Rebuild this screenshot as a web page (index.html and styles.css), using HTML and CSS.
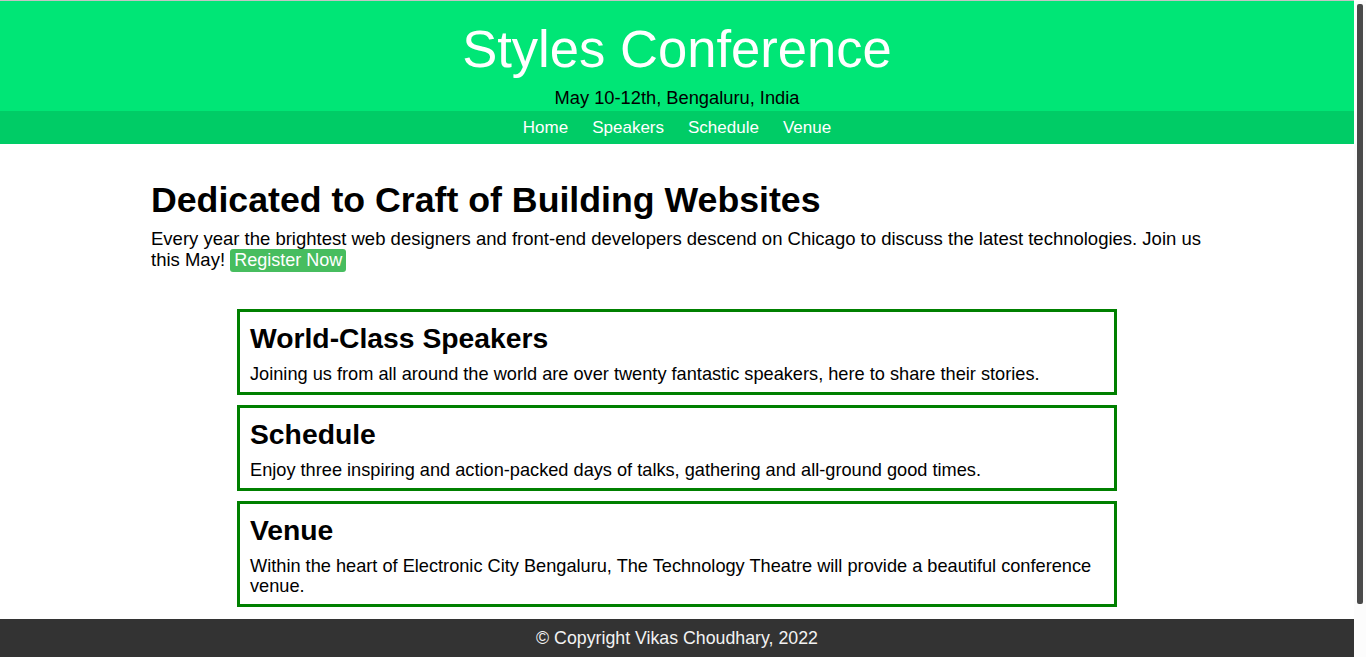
FILE: index.html
```html
<!DOCTYPE html>
<html lang="en">
<head>
<meta charset="utf-8">
<title>Styles Conference</title>
<link rel="stylesheet" href="styles.css">
</head>
<body>
<header class="site-header">
  <div class="masthead">
    <h1 class="logo">Styles Conference</h1>
    <p class="tagline">May 10-12th, Bengaluru, India</p>
  </div>
  <nav class="nav">
    <a href="#" class="nav-link">Home</a>
    <a href="#" class="nav-link">Speakers</a>
    <a href="#" class="nav-link">Schedule</a>
    <a href="#" class="nav-link">Venue</a>
  </nav>
</header>

<main class="main">
  <section class="intro">
    <h1 class="intro-title">Dedicated to Craft of Building Websites</h1>
    <p class="intro-text">Every year the brightest web designers and front-end developers descend on Chicago to discuss the latest technologies. Join us this May! <a href="#" class="btn">Register Now</a></p>
  </section>

  <section class="cards">
    <article class="card">
      <h2 class="card-title">World-Class Speakers</h2>
      <p class="card-text">Joining us from all around the world are over twenty fantastic speakers, here to share their stories.</p>
    </article>
    <article class="card">
      <h2 class="card-title">Schedule</h2>
      <p class="card-text">Enjoy three inspiring and action-packed days of talks, gathering and all-ground good times.</p>
    </article>
    <article class="card">
      <h2 class="card-title">Venue</h2>
      <p class="card-text">Within the heart of Electronic City Bengaluru, The Technology Theatre will provide a beautiful conference venue.</p>
    </article>
  </section>
</main>

<footer class="footer">
  <p class="footer-text">&copy; Copyright Vikas Choudhary, 2022</p>
</footer>

<div class="scrollbar" aria-hidden="true"><div class="scrollbar-thumb"></div></div>
</body>
</html>
```

FILE: styles.css
```css
* {
  box-sizing: border-box;
}

body {
  margin: 0 12px 0 0;
  border-top: 1px solid #c4c4c4;
  font-family: "Liberation Sans", Arial, sans-serif;
  font-size: 18.5px;
  color: #000;
  background: #fff;
}

/* decorative overlay scrollbar, as in the reference */
.scrollbar {
  position: fixed;
  top: 1px;
  right: 0;
  bottom: 0;
  width: 12px;
  background: #fcfcfc;
  padding: 3px;
}

.scrollbar-thumb {
  width: 6px;
  height: 600px;
  background: #4a4a4a;
  border-radius: 2px;
}

.site-header {
  background: #00e676;
}

.masthead {
  height: 110px;
  display: flex;
  flex-direction: column;
  align-items: center;
  padding-top: 18px;
}

.logo {
  margin: 0;
  font-size: 52.6px;
  font-weight: normal;
  line-height: 60px;
  color: #fff;
}

.tagline {
  margin: 9px 0 0;
  font-size: 18.3px;
  line-height: 20px;
}

.nav {
  background: #00cc66;
  height: 33px;
  display: flex;
  justify-content: center;
  align-items: center;
  gap: 24px;
}

.nav-link {
  color: #fff;
  text-decoration: none;
  font-size: 17px;
}

.main {
  padding: 34px 136px 12px 151px;
}

.intro-title {
  margin: 0 0 6px;
  font-size: 35.7px;
  line-height: 44px;
  font-weight: bold;
}

.intro-text {
  margin: 0;
  line-height: 21px;
}

.btn {
  display: inline-block;
  background: #47bd5f;
  color: #fff;
  text-decoration: none;
  padding: 1px 4px;
  border-radius: 3px;
  line-height: 21px;
  font-size: 18px;
}

.cards {
  width: 880px;
  margin: 37px 0 0 86px;
  display: flex;
  flex-direction: column;
  gap: 10px;
}

.card {
  border: 3px solid #008000;
  padding: 8px 10px 8px;
}

.card-title {
  margin: 0;
  font-size: 28.3px;
  line-height: 36px;
  font-weight: bold;
}

.card-text {
  margin: 8px 0 0;
  font-size: 18.2px;
  line-height: 20px;
}

.footer {
  background: #333;
  padding: 8px 0 60px;
}

.footer-text {
  margin: 0;
  text-align: center;
  color: #f2f2f2;
  font-size: 17.75px;
  line-height: 22px;
}
```
